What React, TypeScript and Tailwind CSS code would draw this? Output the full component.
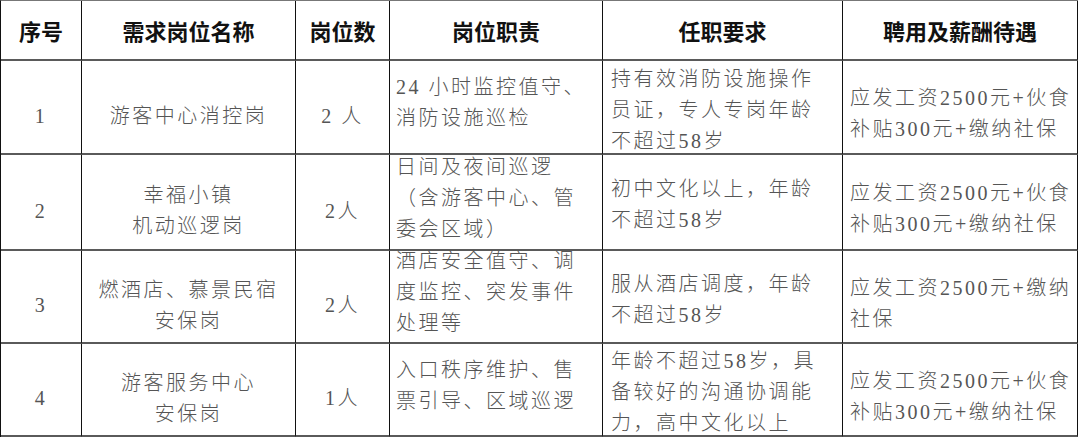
const COLS = "grid-cols-[81px_214px_94px_213px_240px_235px]";

const headers = ["序号", "需求岗位名称", "岗位数", "岗位职责", "任职要求", "聘用及薪酬待遇"];

type Row = {
    no: string;
    name: string[];
    count: string;
    duty: string[];
    req: string[];
    pay: string[];
    h: string;
};

const rows: Row[] = [
    {
        no: "1",
        name: ["游客中心消控岗"],
        count: "2 人",
        duty: ["24 小时监控值守、", "消防设施巡检"],
        req: ["持有效消防设施操作", "员证，专人专岗年龄", "不超过58岁"],
        pay: ["应发工资2500元+伙食", "补贴300元+缴纳社保"],
        h: "h-[94px]",
    },
    {
        no: "2",
        name: ["幸福小镇", "机动巡逻岗"],
        count: "2人",
        duty: ["日间及夜间巡逻", "（含游客中心、管", "委会区域）"],
        req: ["初中文化以上，年龄", "不超过58岁"],
        pay: ["应发工资2500元+伙食", "补贴300元+缴纳社保"],
        h: "h-[96px]",
    },
    {
        no: "3",
        name: ["燃酒店、慕景民宿", "安保岗"],
        count: "2人",
        duty: ["酒店安全值守、调", "度监控、突发事件", "处理等"],
        req: ["服从酒店调度，年龄", "不超过58岁"],
        pay: ["应发工资2500元+缴纳", "社保"],
        h: "h-[93px]",
    },
    {
        no: "4",
        name: ["游客服务中心", "安保岗"],
        count: "1人",
        duty: ["入口秩序维护、售", "票引导、区域巡逻"],
        req: ["年龄不超过58岁，具", "备较好的沟通协调能", "力，高中文化以上"],
        pay: ["应发工资2500元+伙食", "补贴300元+缴纳社保"],
        h: "h-[93px]",
    },
];

function Lines({ lines }: { lines: string[] }) {
    return (
        <div>
            {lines.map((l, i) => (
                <div key={i} className="whitespace-pre">
                    {l}
                </div>
            ))}
        </div>
    );
}

export default function App() {
    const cell = "border-r border-b-2 border-r-[#111] border-b-[#5a5a5a] flex items-center";
    return (
        <div className="w-[1080px] h-[439px] bg-white">
            <div
                className={`grid ${COLS} w-[1078px] border-l border-t border-l-[#111] border-t-[#777]`}
            >
                {headers.map((h) => (
                    <div
                        key={h}
                        className={`${cell} h-[60px] justify-center font-['Noto_Sans_CJK_SC',sans-serif] font-bold text-[22px] text-[#111]`}
                    >
                        {h}
                    </div>
                ))}
                {rows.map((r) => (
                    <div key={r.no} className="contents font-['Liberation_Serif','Noto_Sans_CJK_SC',serif] font-light text-[20px] leading-[31px] tracking-[2.5px] text-[#555]">
                        <div className={`${cell} ${r.h} justify-center pt-[18px]`}>{r.no}</div>
                        <div className={`${cell} ${r.h} justify-center text-center pt-[18px]`}>
                            <Lines lines={r.name} />
                        </div>
                        <div className={`${cell} ${r.h} justify-center pt-[18px]`}>{r.count}</div>
                        <div className={`${cell} ${r.h} pl-[6px] pb-[8px]`}>
                            <Lines lines={r.duty} />
                        </div>
                        <div className={`${cell} ${r.h} pl-[8px] pt-[6px]`}>
                            <Lines lines={r.req} />
                        </div>
                        <div className={`${cell} ${r.h} pl-[7px] pt-[14px]`}>
                            <Lines lines={r.pay} />
                        </div>
                    </div>
                ))}
            </div>
        </div>
    );
}
